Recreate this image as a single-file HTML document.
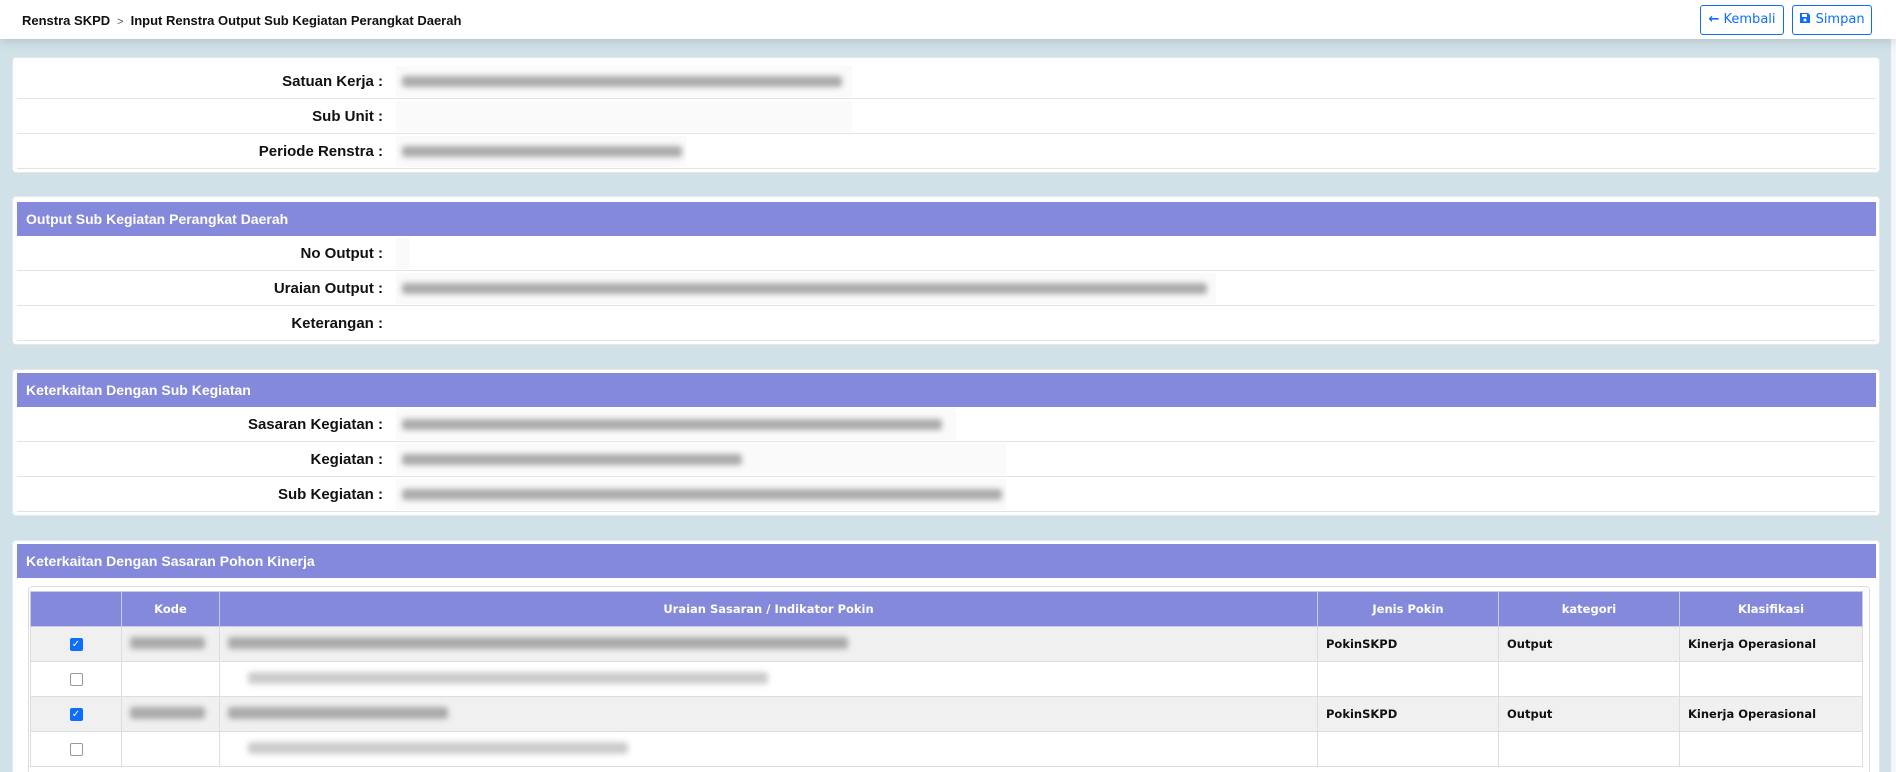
<!DOCTYPE html>
<html style="overflow:hidden;height:772px"><head><meta charset="utf-8"><style>
*{box-sizing:border-box;margin:0;padding:0}
body{width:1896px;height:772px;overflow:hidden;background:#d0e2e8;font-family:"Liberation Sans",sans-serif;position:relative}
.hdr{position:absolute;left:0;top:0;width:1896px;height:39px;background:#fff;box-shadow:0 2px 10px rgba(0,0,0,.15);z-index:2}
.bc{position:absolute;left:22px;top:13px;font-size:13px;font-weight:bold;color:#111}
.bc span{font-weight:normal;color:#555;margin:0 7px;font-size:11px}
.btn{position:absolute;top:5px;height:30px;border:1px solid #0d6efd;border-radius:3px;color:#0d6efd;line-height:28px;background:#fff;font-family:"DejaVu Sans",sans-serif;font-size:13px;text-align:center}
.scroll{position:absolute;right:0;top:0;width:5px;height:772px;background:#f4f6f7}
.card{position:absolute;left:12px;width:1868px;background:#fff;border:1px solid #e4e8ea;border-radius:4px}
.band{position:absolute;left:4px;width:1859px;height:34px;background:#8489db;color:#fff;font-weight:bold;font-size:14px;line-height:34px;padding-left:9px}
.row{position:absolute;left:4px;width:1859px;height:35px;border-bottom:1px solid #e3e3e3}
.lbl{position:absolute;right:1493px;top:9px;font-size:15px;font-weight:bold;color:#111;white-space:nowrap}
.val{position:absolute;left:379px;top:2px;height:31px;background:#fafafa}
.val i{position:absolute;left:6px;top:10px;height:11px;background:#aaa;filter:blur(3px);border-radius:3px}
table{position:absolute;left:30px;top:591px;border-collapse:collapse;font-family:"DejaVu Sans",sans-serif;font-size:11.5px}
th{background:#8489db;color:#fff;height:35px;font-weight:bold;border:1px solid #c9c9e8}
td{height:35px;border:1px solid #ddd;font-weight:bold;color:#111;padding-left:8px}
tr.g td{background:#f0f0f0}
.cb{width:13px;height:13px;border:1px solid #999;border-radius:2px;margin:auto;background:#fff}
.cb.on{background:#0d6efd;border-color:#0d6efd;color:#fff;font-size:10px;line-height:12px;text-align:center}
.bl{display:inline-block;height:12px;background:#aaa;filter:blur(3px);border-radius:3px}
</style></head><body>
<div class="hdr"><div class="bc">Renstra SKPD<span>&gt;</span>Input Renstra Output Sub Kegiatan Perangkat Daerah</div>
<div class="btn" style="left:1700px;width:84px"><b>&#8592;</b> Kembali</div>
<div class="btn" style="left:1792px;width:80px"><svg width="12" height="12" viewBox="0 0 12 12" style="vertical-align:-1px"><path d="M1 1h8l2 2v8H1z" fill="#0d6efd"/><rect x="3" y="2" width="5" height="3" fill="#fff"/><circle cx="6" cy="8" r="1.5" fill="#fff"/></svg> Simpan</div>
</div>
<div class="scroll"></div>

<div class="card" style="top:57px;height:116px">
<div class="row" style="top:6px"><div class="lbl">Satuan Kerja :</div><div class="val" style="width:456px"><i style="width:440px"></i></div></div>
<div class="row" style="top:41px"><div class="lbl">Sub Unit :</div><div class="val" style="width:456px"></div></div>
<div class="row" style="top:76px"><div class="lbl">Periode Renstra :</div><div class="val" style="width:290px"><i style="width:280px"></i></div></div>
</div>

<div class="card" style="top:196px;height:149px">
<div class="band" style="top:5px">Output Sub Kegiatan Perangkat Daerah</div>
<div class="row" style="top:39px"><div class="lbl">No Output :</div><div class="val" style="width:14px"></div></div>
<div class="row" style="top:74px"><div class="lbl">Uraian Output :</div><div class="val" style="width:820px"><i style="width:805px"></i></div></div>
<div class="row" style="top:109px"><div class="lbl">Keterangan :</div></div>
</div>

<div class="card" style="top:369px;height:147px">
<div class="band" style="top:3px">Keterkaitan Dengan Sub Kegiatan</div>
<div class="row" style="top:37px"><div class="lbl">Sasaran Kegiatan :</div><div class="val" style="width:560px"><i style="width:540px"></i></div></div>
<div class="row" style="top:72px"><div class="lbl">Kegiatan :</div><div class="val" style="width:610px"><i style="width:340px"></i></div></div>
<div class="row" style="top:107px"><div class="lbl">Sub Kegiatan :</div><div class="val" style="width:610px"><i style="width:600px"></i></div></div>
</div>

<div class="card" style="top:540px;height:240px">
<div class="band" style="top:3px">Keterkaitan Dengan Sasaran Pohon Kinerja</div>
<div style="position:absolute;left:15px;top:45px;width:1842px;height:200px;border:1px solid #ddd;border-radius:4px"></div>
</div>
<table>
<tr><th style="width:91px"></th><th style="width:98px">Kode</th><th style="width:1098px">Uraian Sasaran / Indikator Pokin</th><th style="width:181px">Jenis Pokin</th><th style="width:181px">kategori</th><th style="width:183px">Klasifikasi</th></tr>
<tr class="g"><td style="padding:0"><div class="cb on">✓</div></td><td><span class="bl" style="width:75px"></span></td><td><span class="bl" style="width:620px"></span></td><td>PokinSKPD</td><td>Output</td><td>Kinerja Operasional</td></tr>
<tr><td style="padding:0"><div class="cb"></div></td><td></td><td><span class="bl" style="width:520px;margin-left:20px;background:#ccc"></span></td><td></td><td></td><td></td></tr>
<tr class="g"><td style="padding:0"><div class="cb on">✓</div></td><td><span class="bl" style="width:75px"></span></td><td><span class="bl" style="width:220px"></span></td><td>PokinSKPD</td><td>Output</td><td>Kinerja Operasional</td></tr>
<tr><td style="padding:0"><div class="cb"></div></td><td></td><td><span class="bl" style="width:380px;margin-left:20px;background:#ccc"></span></td><td></td><td></td><td></td></tr>
</table>
</body></html>
